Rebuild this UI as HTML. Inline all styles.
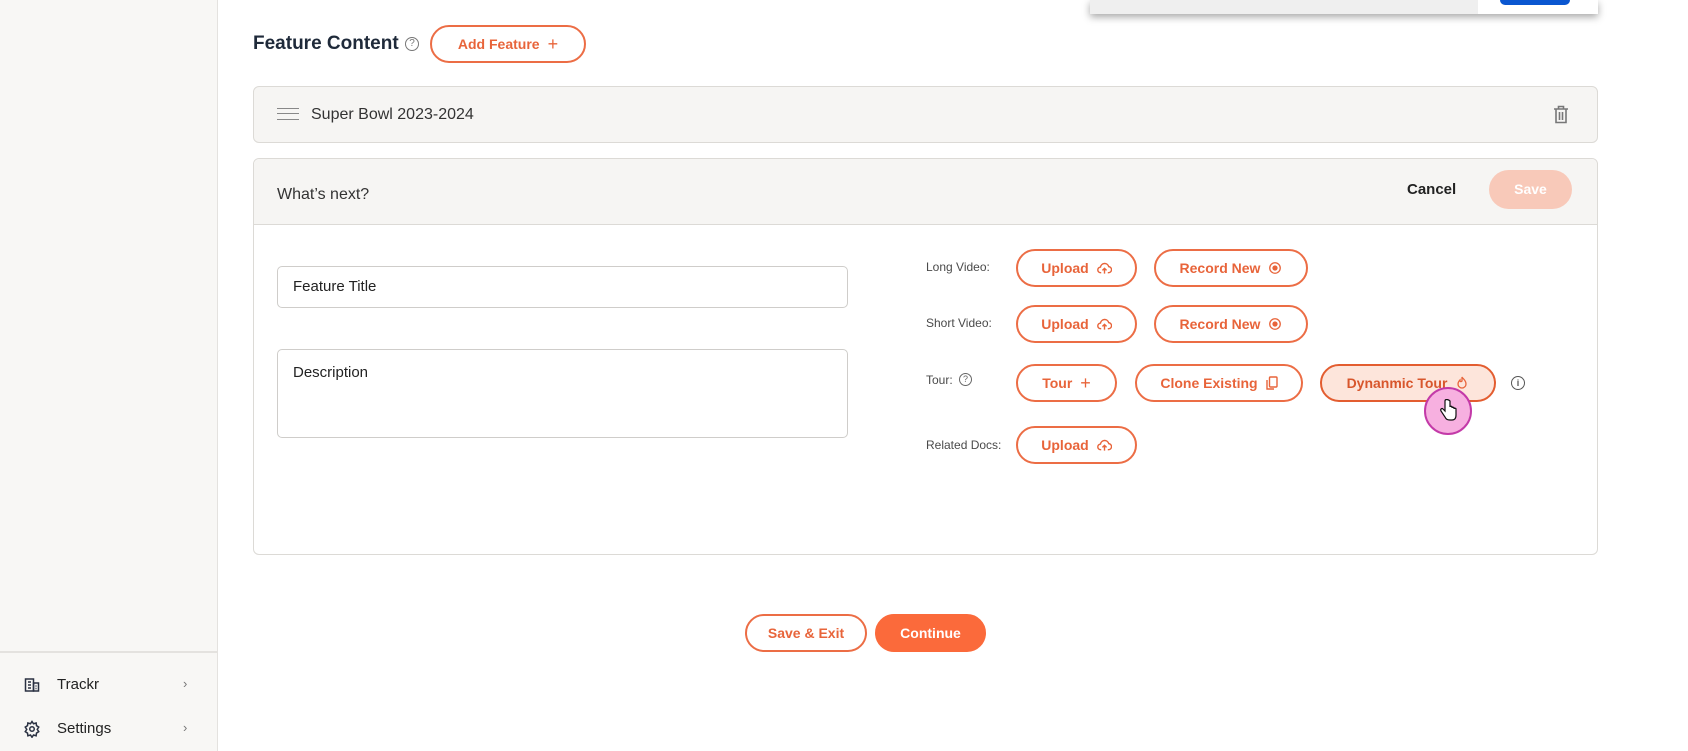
<!DOCTYPE html>
<html><head><meta charset="utf-8"><style>
*{box-sizing:border-box;margin:0;padding:0}
body{width:1688px;height:751px;position:relative;background:#fff;font-family:"Liberation Sans",sans-serif;overflow:hidden;color:#1f2533}
.abs{position:absolute}
.side{left:0;top:0;width:218px;height:751px;background:#f8f7f5;border-right:1px solid #e4e2df}
.btn{position:absolute;border:2px solid #ec6d45;border-radius:20px;color:#e8643a;font-weight:bold;font-size:14px;display:flex;align-items:center;justify-content:center;gap:8px;background:#fff}
.lbl{position:absolute;font-size:12px;color:#4a4a4a;left:926px}
.card{position:absolute;left:253px;width:1345px;border:1px solid #dcdad6;border-radius:6px;background:#f6f5f3}
.inp{position:absolute;left:277px;width:571px;border:1px solid #cfcdca;border-radius:5px;background:#fff;font-size:15px;padding:14px 15px;color:#222}
svg{display:block}
</style></head><body>
<div class="abs side">
 <div class="abs" style="left:0;top:651px;width:218px;border-top:2px solid #e4e2df"></div>
 <div class="abs" style="left:24px;top:677px"><svg width="16" height="16" viewBox="0 0 16 16" fill="none" stroke="#2a3142" stroke-width="1.5"><rect x="1.5" y="2" width="8" height="12"/><rect x="9.5" y="6" width="5" height="8"/><path d="M4 5h3M4 8h3M4 11h3M11.5 9h1M11.5 11.5h1"/></svg></div>
 <div class="abs" style="left:57px;top:676px;font-size:15px;color:#222">Trackr</div>
 <div class="abs" style="left:183px;top:676px;font-size:13px;color:#777">›</div>
 <div class="abs" style="left:23px;top:720px"><svg width="18" height="18" viewBox="0 0 24 24" fill="none" stroke="#2a3142" stroke-width="2"><circle cx="12" cy="12" r="3"/><path d="M12 2l2 3 3.5-1 .5 3.5 3 2-2 3 2 3-3 2-.5 3.5-3.5-1-2 3-2-3-3.5 1-.5-3.5-3-2 2-3-2-3 3-2 .5-3.5 3.5 1z"/></svg></div>
 <div class="abs" style="left:57px;top:720px;font-size:15px;color:#222">Settings</div>
 <div class="abs" style="left:183px;top:720px;font-size:13px;color:#777">›</div>
</div>
<div class="abs" style="left:1090px;top:0;width:508px;height:14px;background:#fff;box-shadow:0 3px 8px rgba(0,0,0,.35)">
 <div class="abs" style="left:0;top:0;width:388px;height:14px;background:#efefef"></div>
 <div class="abs" style="left:410px;top:0;width:70px;height:5px;background:#0a56d0;border-radius:0 0 5px 5px"></div>
</div>
<div class="abs" style="left:253px;top:33px;font-size:19px;font-weight:bold;color:#1f2a3a">Feature Content</div>
<div class="abs" style="left:405px;top:37px;width:14px;height:14px;border:1.3px solid #777;border-radius:50%;font-size:10px;color:#777;text-align:center;line-height:12px">?</div>
<div class="btn" style="left:430px;top:25px;width:156px;height:38px">Add Feature <span style="font-weight:normal;font-size:18px">+</span></div>

<div class="card" style="top:86px;height:57px">
 <div class="abs" style="left:23px;top:21px;width:22px;height:12px;border-top:1.5px solid #888;border-bottom:1.5px solid #888"><div style="margin-top:4px;border-top:1.5px solid #888"></div></div>
 <div class="abs" style="left:57px;top:19px;font-size:16px;color:#333">Super Bowl 2023-2024</div>
 <div class="abs" style="left:1299px;top:18px"><svg width="16" height="19" viewBox="0 0 16 19" fill="none" stroke="#777" stroke-width="1.6"><path d="M1 4h14M5.5 4V1.5h5V4M3 4v13.5h10V4M6.5 7v8M9.5 7v8"/></svg></div>
</div>
<div class="card" style="top:158px;height:397px;background:#fff">
 <div class="abs" style="left:0;top:0;width:1343px;height:66px;background:#f6f5f3;border-bottom:1px solid #dcdad6;border-radius:6px 6px 0 0"></div>
 <div class="abs" style="left:23px;top:27px;font-size:16px;color:#333">What’s next?</div>
 <div class="abs" style="left:1153px;top:22px;font-size:15px;font-weight:bold;color:#222">Cancel</div>
 <div class="abs" style="left:1235px;top:11px;width:83px;height:39px;border-radius:20px;background:#f8c9b9;color:#fff;font-size:14px;font-weight:bold;text-align:center;line-height:39px">Save</div>
</div>
<div class="inp" style="top:266px;height:42px;padding-top:11px">Feature Title</div>
<div class="inp" style="top:349px;height:89px">Description</div>

<div class="lbl" style="top:260px">Long Video:</div>
<div class="lbl" style="top:316px">Short Video:</div>
<div class="lbl" style="top:373px">Tour:</div>
<div class="abs" style="left:959px;top:373px;width:13px;height:13px;border:1.2px solid #666;border-radius:50%;font-size:9px;color:#666;text-align:center;line-height:11px">?</div>
<div class="lbl" style="top:438px">Related Docs:</div>

<svg width="0" height="0" style="position:absolute"><defs><symbol id="up" viewBox="0 0 16 16"><path d="M4.5 12.5H4a3 3 0 0 1-.3-6A4.5 4.5 0 0 1 12.5 6 3 3 0 0 1 12 12.5h-.5M8 13.5V8M5.8 10 8 7.8 10.2 10" fill="none" stroke="#e8643a" stroke-width="1.5"/></symbol><symbol id="rec" viewBox="0 0 16 16"><circle cx="8" cy="8" r="6" fill="none" stroke="#e8643a" stroke-width="1.5"/><circle cx="8" cy="8" r="3" fill="#e8643a"/></symbol></defs></svg>

<div class="btn" style="left:1016px;top:249px;width:121px;height:38px">Upload <svg width="15" height="15"><use href="#up"/></svg></div>
<div class="btn" style="left:1154px;top:249px;width:154px;height:38px">Record New <svg width="14" height="14"><use href="#rec"/></svg></div>
<div class="btn" style="left:1016px;top:305px;width:121px;height:38px">Upload <svg width="15" height="15"><use href="#up"/></svg></div>
<div class="btn" style="left:1154px;top:305px;width:154px;height:38px">Record New <svg width="14" height="14"><use href="#rec"/></svg></div>
<div class="btn" style="left:1016px;top:364px;width:101px;height:38px">Tour <span style="font-weight:normal;font-size:18px">+</span></div>
<div class="btn" style="left:1135px;top:364px;width:168px;height:38px">Clone Existing <svg width="12" height="14" viewBox="0 0 12 14" fill="none" stroke="#e8643a" stroke-width="1.4"><rect x="3.5" y="1" width="7.5" height="10" rx="1"/><path d="M1 4v9h7"/></svg></div>
<div class="btn" style="left:1320px;top:364px;width:176px;height:38px;background:#fde5db;border-color:#e35d30;color:#d8562c">Dynanmic Tour <svg width="14" height="15" viewBox="0 0 14 15" fill="none" stroke="#e8643a" stroke-width="1.3"><path d="M7 1c1 2 4 3 4 7a4 4 0 0 1-8 0c0-2 1-3 2-4 0 2 1 2 2 1z"/></svg></div>
<div class="abs" style="left:1511px;top:376px;width:14px;height:14px;border:1.2px solid #555;border-radius:50%;font-size:9px;color:#555;text-align:center;line-height:12px;font-weight:bold">i</div>
<div class="btn" style="left:1016px;top:426px;width:121px;height:38px">Upload <svg width="15" height="15"><use href="#up"/></svg></div>

<div class="abs" style="left:1424px;top:387px;width:48px;height:48px;border-radius:50%;background:#f7b0e0;border:2.5px solid #c33aa8"></div>
<div class="abs" style="left:1440px;top:399px"><svg width="18" height="22" viewBox="0 0 18 22"><path d="M5 2v10l-2-2c-1-1-3 0-2 2l4 6c1 2 2 3 5 3h2c3 0 4-2 4-5V10c0-1-2-1-2 0V9c0-1-2-1-2 0V8c0-1-2-1-2 0V2C8 0 5 0 5 2z" fill="#fff" stroke="#111" stroke-width="1.2"/></svg></div>

<div class="btn" style="left:745px;top:614px;width:122px;height:38px">Save &amp; Exit</div>
<div class="btn" style="left:875px;top:614px;width:111px;height:38px;background:#fb6a3b;border-color:#fb6a3b;color:#fff">Continue</div>
</body></html>
